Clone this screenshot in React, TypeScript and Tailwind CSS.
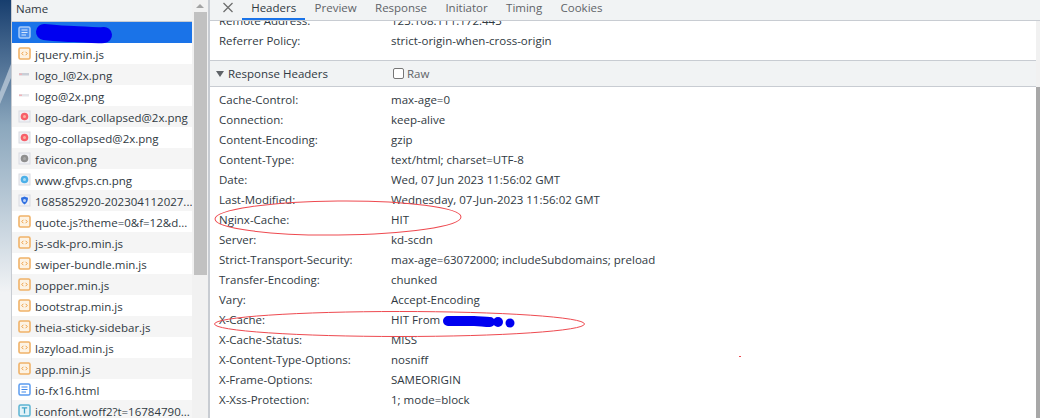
const files = [
  { name: "", icon: "docSelected" },
  { name: "jquery.min.js", icon: "js" },
  { name: "logo_l@2x.png", icon: "bar" },
  { name: "logo@2x.png", icon: "barLight" },
  { name: "logo-dark_collapsed@2x.png", icon: "red" },
  { name: "logo-collapsed@2x.png", icon: "red" },
  { name: "favicon.png", icon: "gray" },
  { name: "www.gfvps.cn.png", icon: "sky" },
  { name: "1685852920-202304112027...", icon: "shield" },
  { name: "quote.js?theme=0&f=12&d...", icon: "js" },
  { name: "js-sdk-pro.min.js", icon: "js" },
  { name: "swiper-bundle.min.js", icon: "js" },
  { name: "popper.min.js", icon: "js" },
  { name: "bootstrap.min.js", icon: "js" },
  { name: "theia-sticky-sidebar.js", icon: "js" },
  { name: "lazyload.min.js", icon: "js" },
  { name: "app.min.js", icon: "js" },
  { name: "io-fx16.html", icon: "doc" },
  { name: "iconfont.woff2?t=16784790...", icon: "font" },
];

const tabs = ["Headers", "Preview", "Response", "Initiator", "Timing", "Cookies"];

const responseHeaders = [
  ["Cache-Control:", "max-age=0"],
  ["Connection:", "keep-alive"],
  ["Content-Encoding:", "gzip"],
  ["Content-Type:", "text/html; charset=UTF-8"],
  ["Date:", "Wed, 07 Jun 2023 11:56:02 GMT"],
  ["Last-Modified:", "Wednesday, 07-Jun-2023 11:56:02 GMT"],
  ["Nginx-Cache:", "HIT"],
  ["Server:", "kd-scdn"],
  ["Strict-Transport-Security:", "max-age=63072000; includeSubdomains; preload"],
  ["Transfer-Encoding:", "chunked"],
  ["Vary:", "Accept-Encoding"],
  ["X-Cache:", "HIT From"],
  ["X-Cache-Status:", "MISS"],
  ["X-Content-Type-Options:", "nosniff"],
  ["X-Frame-Options:", "SAMEORIGIN"],
  ["X-Xss-Protection:", "1; mode=block"],
];

function FileIcon({ type }: { type: string }) {
  if (type === "js") {
    return (
      <svg className="shrink-0" width="13" height="13" viewBox="0 0 13 13">
        <rect x="1" y="1" width="11" height="11" rx="1.5" fill="#fdf3e4" stroke="#f0b268" strokeWidth="1.6" />
        <path d="M5.4 4.8 3.8 6.5l1.6 1.7M7.6 4.8l1.6 1.7-1.6 1.7" fill="none" stroke="#ee9f45" strokeWidth="1" />
      </svg>
    );
  }
  if (type === "doc" || type === "docSelected") {
    const selected = type === "docSelected";
    return (
      <svg className="shrink-0" width="13" height="13" viewBox="0 0 13 13">
        <rect x="1" y="1" width="11" height="11" rx="1.5" fill={selected ? "#4a8fee" : "#fff"} stroke={selected ? "#a9cbf8" : "#5b9cf0"} strokeWidth="1.5" />
        <path d="M3.5 4h6M3.5 6.5h6M3.5 9h4.5" stroke={selected ? "#d8e7fc" : "#3f87ea"} strokeWidth="1.1" />
      </svg>
    );
  }
  if (type === "font") {
    return (
      <svg className="shrink-0" width="13" height="13" viewBox="0 0 13 13">
        <rect x="1" y="1" width="11" height="11" rx="1.5" fill="#e3f3f8" stroke="#5cb4d2" strokeWidth="1.5" />
        <path d="M3.8 3.8h5.4M6.5 3.8v5.6" stroke="#3ea3c6" strokeWidth="1.3" />
      </svg>
    );
  }
  if (type === "bar" || type === "barLight") {
    return (
      <svg className="shrink-0" width="13" height="13" viewBox="0 0 13 13">
        <rect x="1" y="5" width="10" height="2.5" fill={type === "bar" ? "#c9ced6" : "#e4e6ea"} />
        <rect x="1" y="5.5" width="3" height="1.5" fill="#eeb4ba" />
      </svg>
    );
  }
  const fills: Record<string, [string, string]> = {
    red: ["#f7606a", "#fbb0a0"],
    gray: ["#8f8f8f", "#a8a8a8"],
    sky: ["#4cb0e8", "#a8dcf6"],
    shield: ["#2f6fe0", "#bcd4f8"],
  };
  const [outer, inner] = fills[type];
  return (
    <svg className="shrink-0" width="13" height="13" viewBox="0 0 13 13">
      <rect x="1" y="1" width="11" height="11" fill="#f0f1f5" stroke="#d9dbe2" />
      {type === "shield" ? (
        <path d="M6.5 2.5 10 3.8c0 3-1 5.2-3.5 6.7C4 9 3 6.8 3 3.8z" fill={outer} />
      ) : (
        <circle cx="6.5" cy="6.5" r="3.8" fill={outer} />
      )}
      <circle cx="6.5" cy="6.5" r="1.5" fill={inner} />
    </svg>
  );
}

function Annotations() {
  return (
    <svg className="absolute top-0 left-0 pointer-events-none" width="1040" height="418" viewBox="0 0 1040 418" fill="none">
      {/* wallpaper streak */}
      <path d="M0 92 11 64v14L0 104z" fill="#c4d2de" opacity="0.7" />
      {/* redacted bits */}
      <path d="M44 32c10 1 22 2 30 2s20 2 30 1" stroke="#0000f0" strokeWidth="16" strokeLinecap="round" />
      <path d="M448 321h26c6 0 10 1 16 1" stroke="#0000f0" strokeWidth="10" strokeLinecap="round" />
      <circle cx="498" cy="322" r="5" fill="#0000f0" />
      <circle cx="510" cy="323" r="4.5" fill="#0000f0" />
      {/* hand drawn circles */}
      <ellipse cx="338" cy="218" rx="123" ry="17" stroke="#ee4a50" strokeWidth="1" transform="rotate(-0.5 338 218)" />
      <ellipse cx="399.5" cy="324" rx="185" ry="12.5" stroke="#ee4a50" strokeWidth="1" />
      <rect x="739" y="356" width="2" height="1" fill="#ee4a50" />
    </svg>
  );
}

export default function App() {
  return (
    <div className="relative flex w-[1040px] h-[418px] overflow-hidden bg-white text-[11.5px] text-[#303942] font-['Open_Sans','Noto_Sans',sans-serif]">
      {/* desktop peeking out on the left */}
      <div className="w-[11px] shrink-0 bg-linear-to-b from-[#173e6e] via-[#8aa6bc] via-30% to-[#f1f3f5] to-70%" />

      <div className="w-[181px] shrink-0 border-l border-[#c8ccd2] flex flex-col">
        <div className="h-[22px] shrink-0 bg-[#f1f3f4] border-b border-[#c8ccd2] pl-[4px] leading-[17px]">Name</div>
        {files.map((file, i) => (
          <div
            key={i}
            className={`h-[21px] shrink-0 flex items-center gap-[4px] pl-[6px] ${
              i === 0 ? "bg-[#1a73e8]" : i % 2 === 1 ? "bg-white" : "bg-[#f5f5f5]"
            }`}
          >
            <FileIcon type={file.icon} />
            <span className="whitespace-nowrap pt-[2px]">{file.name}</span>
          </div>
        ))}
      </div>

      <div className="w-[16px] shrink-0 bg-[#f1f1f1] flex flex-col items-center">
        <div className="h-[12px] w-full flex items-center justify-center">
          <div className="w-0 h-0 border-x-[4px] border-x-transparent border-b-[4px] border-b-[#a3a3a3]" />
        </div>
        <div className="w-[13px] h-[263px] bg-[#c1c1c1]" />
      </div>

      <div className="w-[2px] shrink-0 bg-[#c8ccd2]" />

      <div className="flex-1 min-w-0 flex flex-col">
        <div className="relative z-10 h-[21px] shrink-0 bg-[#f1f3f4] border-b border-[#c8ccd2] flex text-[#5f6368]">
          <svg className="ml-[13px] mr-[9px] mt-[2px]" width="10" height="11" viewBox="0 0 10 11">
            <path d="M.5 1l9 9M9.5 1l-9 9" stroke="#6e6e6e" strokeWidth="1.3" />
          </svg>
          {tabs.map((tab, i) => (
            <div key={tab} className={`relative h-full w-fit px-[9.2px] leading-[15px] ${i === 0 ? "text-[#303942]" : ""}`}>
              {tab}
              {i === 0 && <div className="absolute left-0 right-0 bottom-0 h-[2px] bg-[#1a73e8]" />}
            </div>
          ))}
        </div>

        <div className="flex-1 flex min-h-0">
          <div className="flex-1 min-w-0 overflow-hidden">
            <div className="mt-[-10px]">
              <HeaderRow name="Remote Address:" value="123.108.111.172:443" />
              <HeaderRow name="Referrer Policy:" value="strict-origin-when-cross-origin" />
            </div>
            <div className="mt-[9px] h-[27px] bg-[#f1f3f4] border-y border-[#c8ccd2] flex items-center">
              <div className="ml-[6px] w-0 h-0 border-x-[4px] border-x-transparent border-t-[6px] border-t-[#5f6368]" />
              <span className="ml-[4px] w-[165px]">Response Headers</span>
              <div className="w-[11px] h-[11px] rounded-[2px] border border-[#767676] bg-white" />
              <span className="ml-[3px] text-[#5f6368]">Raw</span>
            </div>
            <div className="mt-[3px]">
              {responseHeaders.map(([name, value]) => (
                <HeaderRow key={name} name={name} value={value} />
              ))}
            </div>
          </div>
          <div className="w-[4px] shrink-0 bg-[#f1f1f1] flex flex-col">
            <div className="h-[66px]" />
            <div className="flex-1 bg-[#a8a8a8]" />
          </div>
        </div>
      </div>

      <Annotations />
    </div>
  );
}

function HeaderRow({ name, value }: { name: string; value: string }) {
  return (
    <div className="h-[20px] flex items-center pl-[9px] whitespace-nowrap">
      <span className="w-[172px] shrink-0">{name}</span>
      <span>{value}</span>
    </div>
  );
}
